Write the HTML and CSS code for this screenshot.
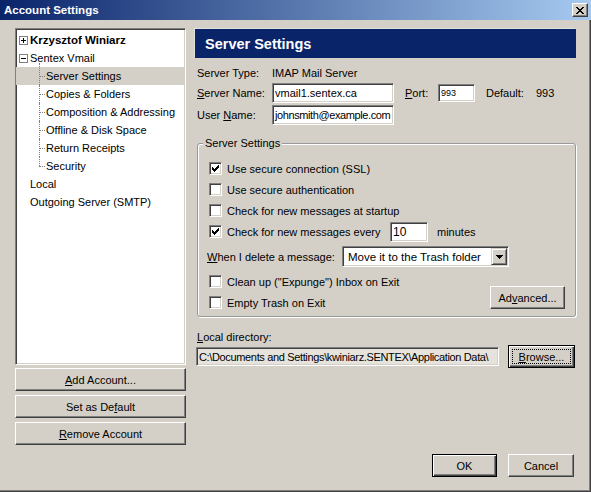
FILE: index.html
```html
<!DOCTYPE html>
<html>
<head>
<meta charset="utf-8">
<link rel="stylesheet" href="styles.css">
</head>
<body>
<div class="window">
  <div class="titlebar">
    <span class="title">Account Settings</span>
    <span class="close"><svg width="8" height="7" viewBox="0 0 8 7" shape-rendering="crispEdges"><path d="M0 0h2v1h-2zM6 0h2v1h-2zM1 1h2v1h-2zM5 1h2v1h-2zM2 2h4v1h-4zM3 3h2v1h-2zM2 4h4v1h-4zM1 5h2v1h-2zM5 5h2v1h-2zM0 6h2v1h-2zM6 6h2v1h-2z" fill="#000"/></svg></span>
  </div>
  <div class="main">
    <div class="leftcol">
      <div class="tree">
        <div class="node root"><svg class="exp" width="9" height="9" viewBox="0 0 9 9" shape-rendering="crispEdges"><rect x="0.5" y="0.5" width="8" height="8" fill="#fff" stroke="#808080"/><path d="M2 4h5v1h-5zM4 2h1v5h-1z" fill="#000"/></svg><b>Krzysztof Winiarz</b></div>
        <div class="node root"><svg class="exp" width="9" height="9" viewBox="0 0 9 9" shape-rendering="crispEdges"><rect x="0.5" y="0.5" width="8" height="8" fill="#fff" stroke="#808080"/><path d="M2 4h5v1h-5z" fill="#000"/></svg>Sentex Vmail</div>
        <div class="children">
          <div class="node child selected">Server Settings</div>
          <div class="node child">Copies &amp; Folders</div>
          <div class="node child">Composition &amp; Addressing</div>
          <div class="node child">Offline &amp; Disk Space</div>
          <div class="node child">Return Receipts</div>
          <div class="node child">Security</div>
        </div>
        <div class="node leaf">Local</div>
        <div class="node leaf">Outgoing Server (SMTP)</div>
      </div>
      <div class="btn side first"><span><u>A</u>dd Account...</span></div>
      <div class="btn side"><span>Set as De<u>f</u>ault</span></div>
      <div class="btn side"><span><u>R</u>emove Account</span></div>
    </div>
    <div class="rightcol">
      <div class="header">Server Settings</div>
      <div class="frow r-type"><span class="lbl">Server Type:</span><span>IMAP Mail Server</span></div>
      <div class="frow"><span class="lbl"><u>S</u>erver Name:</span><div class="input w-name">vmail1.sentex.ca</div><span class="port-lbl"><u>P</u>ort:</span><div class="input port">993</div><span class="def-lbl">Default:</span><span>993</span></div>
      <div class="frow r-user"><span class="lbl">User <u>N</u>ame:</span><div class="input w-name user">johnsmith@example.com</div></div>
      <div class="group">
        <span class="legend">Server Settings</span>
        <div class="cb-row"><span class="cb"><svg width="7" height="7" viewBox="0 0 7 7" shape-rendering="crispEdges"><path d="M0 2h1v3h-1zM1 3h1v3h-1zM2 4h1v3h-1zM3 3h1v3h-1zM4 2h1v3h-1zM5 1h1v3h-1zM6 0h1v3h-1z" fill="#000"/></svg></span><span>Use secure connection (SSL)</span></div>
        <div class="cb-row"><span class="cb"></span><span>Use secure authentication</span></div>
        <div class="cb-row"><span class="cb"></span><span>Check for new messages at startup</span></div>
        <div class="cb-row"><span class="cb"><svg width="7" height="7" viewBox="0 0 7 7" shape-rendering="crispEdges"><path d="M0 2h1v3h-1zM1 3h1v3h-1zM2 4h1v3h-1zM3 3h1v3h-1zM4 2h1v3h-1zM5 1h1v3h-1zM6 0h1v3h-1z" fill="#000"/></svg></span><span class="every">Check for new messages every</span><div class="input mins">10</div><span class="minutes">minutes</span></div>
        <div class="cb-row r-delete"><span class="del-lbl"><u>W</u>hen I delete a message:</span><div class="select"><span>Move it to the Trash folder</span><span class="dd"><svg width="7" height="4" viewBox="0 0 7 4" shape-rendering="crispEdges"><path d="M0 0h7v1h-7zM1 1h5v1h-5zM2 2h3v1h-3zM3 3h1v1h-1z" fill="#000"/></svg></span></div></div>
        <div class="bottom-rows">
          <div class="bottom-left">
            <div class="cb-row"><span class="cb"></span><span>Clean up ("Expunge") Inbox on Exit</span></div>
            <div class="cb-row"><span class="cb"></span><span>Empty Trash on Exit</span></div>
          </div>
          <div class="btn advanced"><span>Ad<u>v</u>anced...</span></div>
        </div>
      </div>
      <div class="dir-lbl"><u>L</u>ocal directory:</div>
      <div class="dir-row">
        <div class="input dir">C:\Documents and Settings\kwiniarz.SENTEX\Application Data\</div>
        <div class="btn default browse"><span class="focus"><span><u>B</u>rowse...</span></span></div>
      </div>
    </div>
  </div>
  <div class="footer">
    <div class="btn default ok"><span>OK</span></div>
    <div class="btn cancel"><span>Cancel</span></div>
  </div>
</div>
</body>
</html>
```

FILE: styles.css
```css
body {
  margin: 0;
  font-family: "Liberation Sans", Arial, sans-serif;
  font-size: 11px;
  color: #000;
}
.window {
  width: 591px;
  height: 492px;
  box-sizing: border-box;
  background: #d4d0c8;
  display: flex;
  flex-direction: column;
  overflow: hidden;
  box-shadow: inset -1px -1px #404040, inset -2px -2px #808080;
}
.titlebar {
  flex: none;
  height: 20px;
  background: linear-gradient(to right, #0a246a, #a6caf0);
  display: flex;
  align-items: center;
  padding-left: 4px;
  color: #fff;
  font-weight: bold;
  font-size: 11.5px;
}
.close {
  margin-left: auto;
  margin-right: 3px;
  width: 16px;
  height: 14px;
  box-sizing: border-box;
  background: #d4d0c8;
  border: 1px solid;
  border-color: #fff #404040 #404040 #fff;
  box-shadow: inset -1px -1px #808080;
  display: flex;
  align-items: center;
  justify-content: center;
}
.close svg { display: block; margin: 0 0 0 -1px; }
.main {
  display: flex;
  gap: 9px;
  padding: 8px 0 0 15px;
}
.leftcol {
  width: 171px;
  flex: none;
  display: flex;
  flex-direction: column;
}
.tree {
  height: 337px;
  box-sizing: border-box;
  background: #fff;
  border: 1px solid;
  border-color: #808080 #fff #fff #808080;
  box-shadow: inset 1px 1px #404040, inset -1px -1px #d4d0c8;
  padding-top: 2px;
}
.node {
  height: 18px;
  display: flex;
  align-items: center;
  padding-left: 3px;
  white-space: nowrap;
  position: relative;
}
.node b { font-weight: bold; font-size: 11.5px; }
.exp { display: block; margin-right: 2px; flex: none; }
.leaf { padding-left: 14px; }
.child { padding-left: 30px; }
.child::before {
  content: "";
  position: absolute;
  left: 23px;
  top: 9px;
  width: 6px;
  border-top: 1px dotted #808080;
}
.child::after {
  content: "";
  position: absolute;
  left: 23px;
  top: 0;
  bottom: 0;
  border-left: 1px dotted #808080;
}
.child:first-child::after { top: -4px; }
.child:last-child::after { bottom: 9px; }
.selected { background: #d4d0c8; }
.btn {
  box-sizing: border-box;
  background: #d4d0c8;
  border: 1px solid;
  border-color: #fff #404040 #404040 #fff;
  box-shadow: inset -1px -1px #808080;
  display: flex;
  align-items: center;
  justify-content: center;
  height: 23px;
  white-space: nowrap;
}
.btn.default {
  border-color: #000;
  box-shadow: inset 1px 1px #fff, inset -1px -1px #404040, inset -2px -2px #808080;
}
.side { margin-top: 4px; }
.side.first { margin-top: 3px; }
.rightcol {
  width: 381px;
  flex: none;
}
.header {
  height: 29px;
  box-sizing: border-box;
  margin-top: 1px;
  background: #0a246a;
  color: #fff;
  font-weight: bold;
  font-size: 14.5px;
  padding-left: 10px;
  display: flex;
  align-items: center;
  box-shadow: -1px -1px 0 #e2e0da;
}
.frow {
  display: flex;
  align-items: center;
  height: 20px;
  padding-left: 2px;
  white-space: nowrap;
}
.r-type { margin-top: 5px; }
.r-user { margin-top: 2px; }
.lbl { width: 75px; flex: none; }
.input {
  box-sizing: border-box;
  height: 20px;
  background: #fff;
  border: 1px solid;
  border-color: #808080 #fff #fff #808080;
  box-shadow: inset 1px 1px #404040, inset -1px -1px #d4d0c8;
  padding: 0 2px;
  display: flex;
  align-items: center;
  overflow: hidden;
  white-space: nowrap;
  flex: none;
}
.w-name { width: 122px; }
.user { letter-spacing: -0.4px; }
.port-lbl { margin-left: 11px; width: 33px; }
.port { width: 37px; height: 18px; font-size: 9px; }
.def-lbl { margin-left: 11px; width: 50px; }
.group {
  position: relative;
  margin: 18px 0 0 2px;
  width: 379px;
  box-sizing: border-box;
  border: 1px solid #999;
  border-radius: 3px;
  box-shadow: inset 1px 1px #fff, 1px 1px 0 #fff;
  padding: 14px 10px 3px 11px;
}
.legend {
  position: absolute;
  top: -7px;
  left: 5px;
  padding: 0 2px;
  line-height: 13px;
  background: #d4d0c8;
}
.cb-row {
  height: 21px;
  display: flex;
  align-items: center;
  white-space: nowrap;
}
.cb {
  width: 13px;
  height: 13px;
  box-sizing: border-box;
  flex: none;
  background: #fff;
  border: 1px solid;
  border-color: #808080 #fff #fff #808080;
  box-shadow: inset 1px 1px #404040, inset -1px -1px #d4d0c8;
  margin-right: 5px;
  display: flex;
  align-items: center;
  justify-content: center;
}
.cb svg { display: block; }
.every { width: 163px; flex: none; }
.mins { width: 38px; font-size: 12px; }
.minutes { margin-left: 9px; }
.r-delete { margin-top: 4px; margin-left: -2px; }
.del-lbl { width: 135px; flex: none; }
.select {
  width: 167px;
  height: 21px;
  box-sizing: border-box;
  background: #fff;
  border: 1px solid;
  border-color: #808080 #fff #fff #808080;
  box-shadow: inset 1px 1px #404040, inset -1px -1px #d4d0c8;
  display: flex;
  align-items: center;
  padding-left: 5px;
  font-size: 11.5px;
}
.dd {
  margin-left: auto;
  margin-right: 1px;
  width: 16px;
  height: 17px;
  box-sizing: border-box;
  background: #d4d0c8;
  border: 1px solid;
  border-color: #d4d0c8 #404040 #404040 #d4d0c8;
  box-shadow: inset 1px 1px #fff, inset -1px -1px #808080;
  display: flex;
  align-items: center;
  justify-content: center;
}
.dd svg { display: block; }
.bottom-rows {
  display: flex;
  margin-top: 4px;
}
.advanced {
  margin-left: auto;
  align-self: flex-end;
  margin-bottom: 4px;
  width: 75px;
}
.dir-lbl {
  margin-top: 13px;
  height: 14px;
  line-height: 14px;
  padding-left: 2px;
}
.dir-row {
  margin-top: 1px;
  height: 23px;
  display: flex;
  align-items: center;
}
.dir {
  margin-left: 1px;
  width: 303px;
  height: 19px;
  background: #e6e3dd;
  font-size: 11px;
  letter-spacing: -0.35px;
}
.browse {
  margin-left: 9px;
  width: 67px;
}
.focus {
  box-sizing: border-box;
  width: 59px;
  height: 15px;
  border: 1px dotted #000;
  display: flex;
  align-items: center;
  justify-content: center;
}
.footer {
  margin-top: auto;
  display: flex;
  justify-content: flex-end;
  gap: 11px;
  padding: 0 17px 15px 0;
}
.ok { width: 65px; }
.cancel { width: 66px; }
```
